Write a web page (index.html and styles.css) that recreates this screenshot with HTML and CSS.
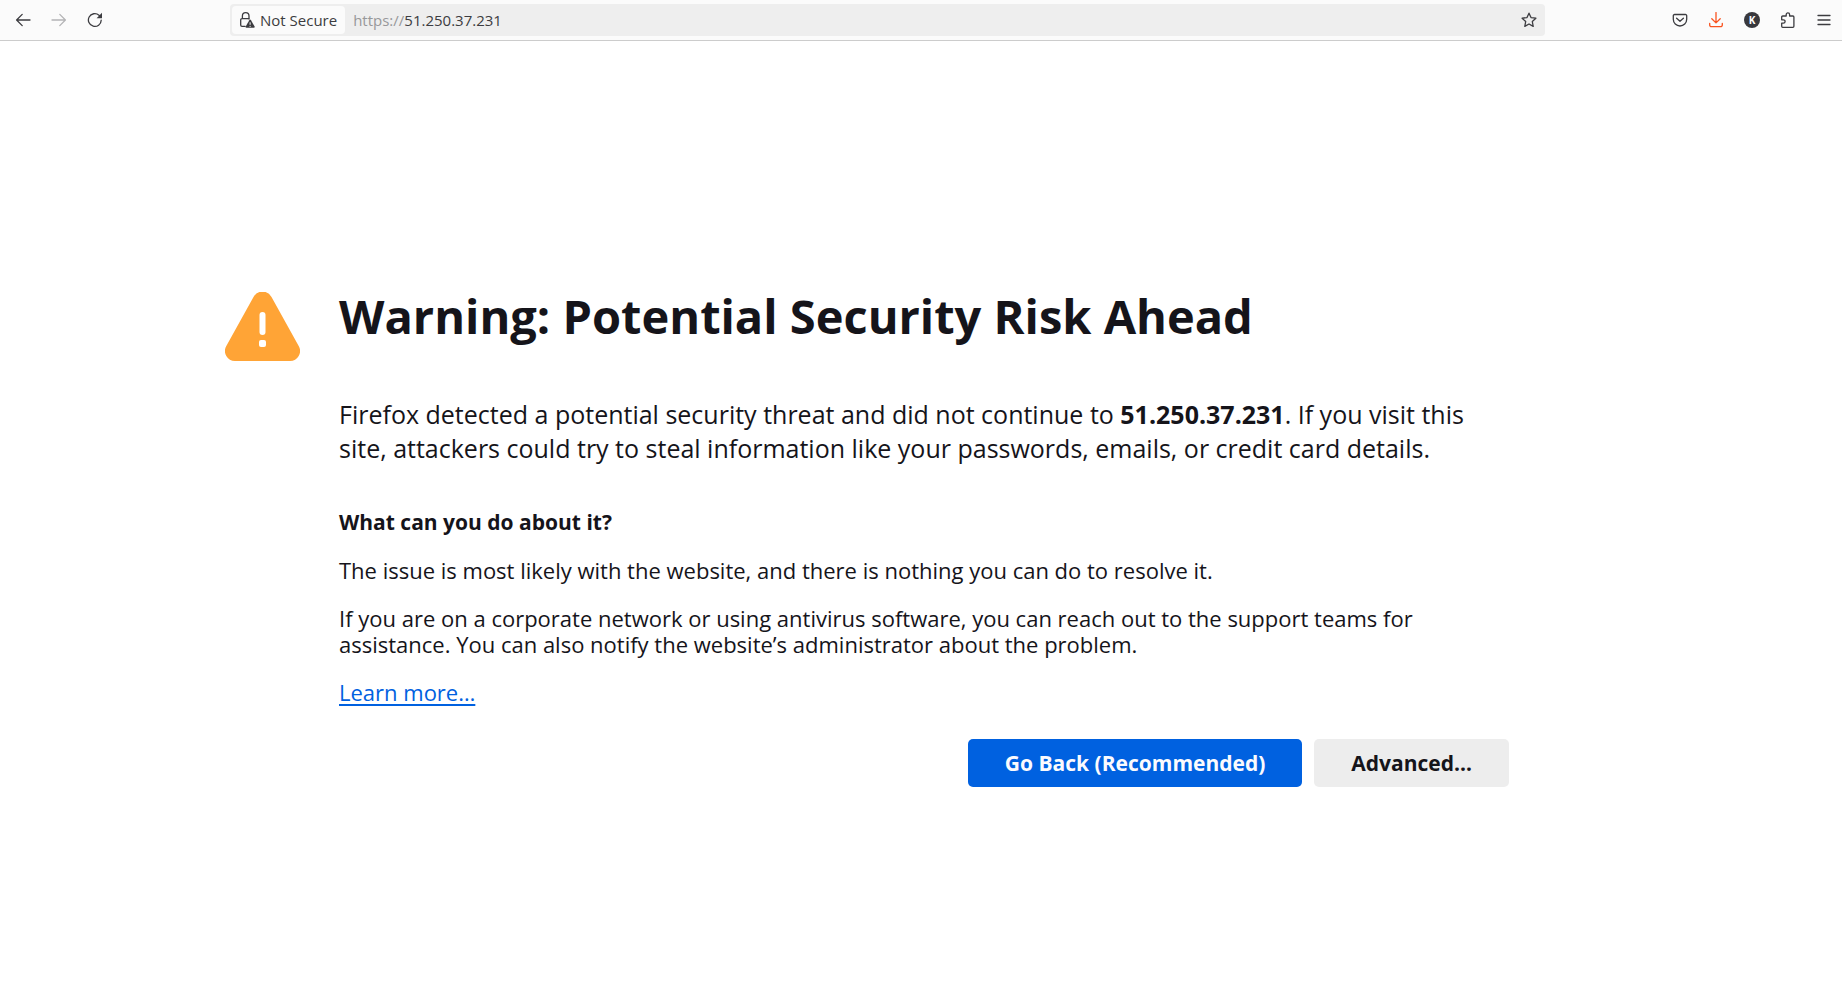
FILE: index.html
```html
<!DOCTYPE html>
<html lang="en">
<head>
<meta charset="utf-8">
<title>Warning: Potential Security Risk Ahead</title>
<link rel="stylesheet" href="styles.css">
</head>
<body>
<header class="toolbar">
  <nav class="tools" aria-label="History">
    <button class="tool" type="button" aria-label="Back">
      <svg class="icon" viewBox="0 0 16 16"><path d="M15 8H1.8M7.2 2.4 1.6 8l5.6 5.6"/></svg>
    </button>
    <button class="tool" type="button" aria-label="Forward" disabled>
      <svg class="icon" viewBox="0 0 16 16"><path d="M1 8h13.2M8.800 2.400 14.400 8l-5.600 5.600"/></svg>
    </button>
    <button class="tool" type="button" aria-label="Reload">
      <svg class="icon" viewBox="0 0 16 16"><path d="M14.200 8.200A6.400 6.400 0 1 1 12 3.200l1 .9"/><path class="solid" d="M15 .8v5.400h-5.400z"/></svg>
    </button>
  </nav>
  <div class="urlbar">
    <button class="identity" type="button">
      <svg class="icon" viewBox="0 0 16 16"><path d="M6.200 14.300H3a1.300 1.300 0 0 1-1.300-1.300V8A1.300 1.300 0 0 1 3 6.700h7.200M3.400 6.500V4a3.300 3.300 0 0 1 6.600 0v3"/><path class="solid" d="M10.300 8.300a1 1 0 0 1 1.700 0l3.600 6.100a1 1 0 0 1-.9 1.400H7.600a1 1 0 0 1-.9-1.400z"/><path class="mark" d="M11.100 10.300v2.500M11.100 13.900v1"/></svg>
      <span>Not Secure</span>
    </button>
    <label class="scheme" for="address">https://</label>
    <input class="address" id="address" type="text" value="51.250.37.231" spellcheck="false">
    <button class="star" type="button" aria-label="Bookmark this page">
      <svg class="icon" viewBox="0 0 16 16"><path d="M8 1.200 10 5.600l4.900.6-3.600 3.300.9 4.900L8 12l-4.200 2.400.9-4.900L1.100 6.200 6 5.600z"/></svg>
    </button>
  </div>
  <div class="tools">
    <button class="tool" type="button" aria-label="Save to Pocket">
      <svg class="icon" viewBox="0 0 16 16"><path d="M2.500 2.500h11a1.200 1.200 0 0 1 1.200 1.200v3.600a6.700 6.700 0 0 1-13.400 0V3.700a1.200 1.200 0 0 1 1.200-1.200zM4.600 6.200 8 9.300l3.400-3.100"/></svg>
    </button>
    <button class="tool tool-download" type="button" aria-label="Downloads">
      <svg class="icon" viewBox="0 0 16 16"><path d="M8 .5v10.200M3.800 6.700 8 10.900l4.200-4.200M1.700 11.300v1.600a1.800 1.800 0 0 0 1.800 1.800h9a1.800 1.800 0 0 0 1.800-1.800v-1.600"/></svg>
    </button>
    <button class="tool" type="button" aria-label="Account"><span class="avatar">K</span></button>
    <button class="tool" type="button" aria-label="Extensions">
      <svg class="icon" viewBox="0 0 16 16"><path d="M1.700 5.100V5a1 1 0 0 1 1-1h3.500V2.600a1.700 1.700 0 0 1 3.400 0V4h3.300a1 1 0 0 1 1 1v9.300a1 1 0 0 1-1 1H2.700a1 1 0 0 1-1-1v-3.100h1.700a1.700 1.700 0 0 0 0-3.400H1.700z"/></svg>
    </button>
    <button class="tool" type="button" aria-label="Menu">
      <svg class="icon" viewBox="0 0 16 16"><path d="M2 3.500h12M2 8h12M2 12.500h12"/></svg>
    </button>
  </div>
</header>
<main class="page">
  <svg class="warning" viewBox="0 0 75 69" aria-hidden="true">
    <path fill="#ffa436" d="M28.500 5a10.200 10.200 0 0 1 18 0L73.700 54a10 10 0 0 1-8.700 15H10A10 10 0 0 1 1.300 54z"/>
    <path stroke="#fff" stroke-width="6" stroke-linecap="round" d="M37.500 23v17"/>
    <rect x="34" y="48" width="7" height="7" rx="2" fill="#fff"/>
  </svg>
  <div class="content">
    <h1 class="title">Warning: Potential Security Risk Ahead</h1>
    <p class="lead">Firefox detected a potential security threat and did not continue to <b>51.250.37.231</b>. If you visit this site, attackers could try to steal information like your passwords, emails, or credit card details.</p>
    <h2 class="subtitle">What can you do about it?</h2>
    <p class="text">The issue is most likely with the website, and there is nothing you can do to resolve it.</p>
    <p class="text">If you are on a corporate network or using antivirus software, you can reach out to the support teams for assistance. You can also notify the website’s administrator about the problem.</p>
    <p class="text"><a class="link" href="#learn-more">Learn more…</a></p>
    <div class="actions">
      <button class="button primary" type="button">Go Back (Recommended)</button>
      <button class="button" type="button">Advanced…</button>
    </div>
  </div>
</main>
</body>
</html>
```
FILE: styles.css
```css
* {
  box-sizing: border-box;
}

body {
  display: flex;
  flex-direction: column;
  min-height: 100vh;
  margin: 0;
  background: #fff;
  color: #15141a;
  font-family: "Open Sans", "Noto Sans", sans-serif;
}

button,
input {
  margin: 0;
  padding: 0;
  border: 0;
  background: none;
  color: inherit;
  font: inherit;
}

h1,
h2,
p {
  margin: 0;
}

/* Browser toolbar */
.toolbar {
  display: flex;
  align-items: center;
  height: 41px;
  padding-left: 5px;
  border-bottom: 1px solid #ccc;
  background: #fbfbfb;
  color: #3c3c40;
  font-size: 15px;
  line-height: 20px;
}

.tools {
  display: flex;
}

.tool {
  display: flex;
  align-items: center;
  justify-content: center;
  width: 36px;
  height: 32px;
}

.tool:disabled {
  color: #b4b4b6;
}

.tool-download {
  color: #f9531f;
}

.icon {
  flex: none;
  width: 16px;
  height: 16px;
  fill: none;
  stroke: currentColor;
  stroke-width: 1.3;
  stroke-linecap: round;
  stroke-linejoin: round;
}

.icon .solid {
  fill: currentColor;
  stroke: none;
}

.icon .mark {
  stroke: #fbfbfb;
  stroke-width: 1;
  stroke-linecap: butt;
}

.avatar {
  width: 16px;
  height: 16px;
  border-radius: 50%;
  background: #38383d;
  color: #fff;
  font-size: 10px;
  font-weight: 700;
  line-height: 16px;
  text-align: center;
}

.urlbar {
  display: flex;
  flex: 1;
  align-items: center;
  height: 32px;
  min-width: 0;
  margin: 0 117px;
  padding: 0 2px;
  border-radius: 4px;
  background: #eee;
}

.identity {
  display: flex;
  align-items: center;
  gap: 5px;
  height: 28px;
  margin-right: 8px;
  padding: 0 8px 0 7px;
  border-radius: 4px;
  background: #fbfbfb;
  white-space: nowrap;
}

.scheme {
  color: #98989a;
}

.address {
  flex: 1;
  min-width: 0;
}

.star {
  display: flex;
  align-items: center;
  justify-content: center;
  width: 28px;
  height: 28px;
}

/* Warning page */
.page {
  display: grid;
  flex: 1;
  grid-template-columns: minmax(75px, 1fr) minmax(0, 1164px) minmax(0, 1fr);
  align-content: center;
  column-gap: 39px;
  padding-top: 24px;
}

.warning {
  justify-self: end;
  width: 75px;
  height: 69px;
  margin-top: 8px;
}

.title {
  margin-bottom: 49px;
  font-size: 47px;
  font-weight: 700;
  line-height: 64px;
}

.lead {
  margin-bottom: 44px;
  font-size: 25px;
  line-height: 34px;
}

.subtitle {
  margin-bottom: 22px;
  font-size: 21px;
  font-weight: 700;
  line-height: 26px;
}

.text {
  margin-bottom: 22px;
  font-size: 22px;
  line-height: 26px;
}

.link {
  color: #0061e0;
  text-decoration: underline;
  text-decoration-thickness: 2px;
  text-underline-offset: 3px;
}

.actions {
  display: flex;
  flex-wrap: wrap;
  justify-content: flex-end;
  gap: 12px;
  margin: 34px -6px 0 0;
}

.button {
  height: 48px;
  padding: 0 37px;
  border-radius: 5px;
  background: #ededed;
  font-size: 21px;
  font-weight: 700;
}

.primary {
  background: #0061e0;
  color: #fbfbfe;
}
```
